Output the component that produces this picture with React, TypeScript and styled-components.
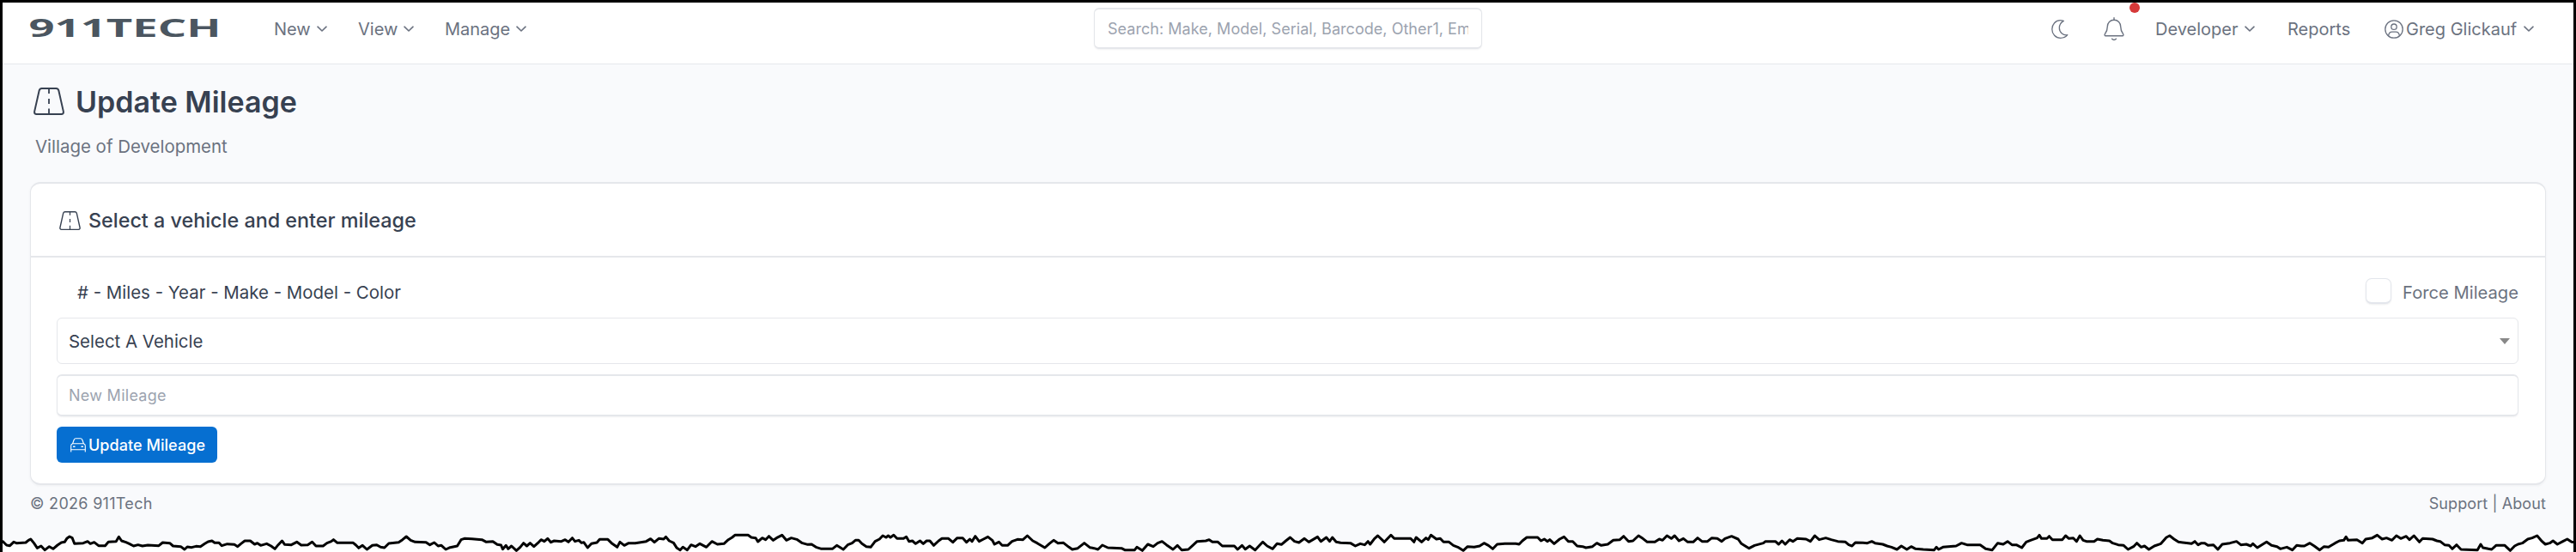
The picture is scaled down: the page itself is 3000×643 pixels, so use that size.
import React from "react";
import styled, { createGlobalStyle } from "styled-components";

const GlobalStyle = createGlobalStyle`
    *{
        box-sizing: border-box;
    }
    body{
        margin: 0;
        background: #ffffff;
        font-family: Inter, "Liberation Sans", sans-serif;
        overflow: hidden;
    }
`

interface IconProps{
    width : number
    height : number
    stroke ?: number
}

const Chevron: React.FunctionComponent = () =>(
    <svg width="12" height="8" viewBox="0 0 12 8" fill="none" stroke="currentColor" strokeWidth="1.6">
        <path d="M1 1.2 L6 6 L11 1.2" strokeLinecap="round" strokeLinejoin="round"/>
    </svg>
)

const RoadIcon: React.FunctionComponent<IconProps> = ({ width, height, stroke = 2 }) =>(
    <svg width={width} height={height} viewBox="0 0 36 32" fill="none" stroke="currentColor" strokeWidth={stroke}>
        <path d="M9.6 1 H26.4 Q28.6 1 29.3 3.2 L34.8 27.6 Q35.4 31 32.4 31 H3.6 Q.6 31 1.2 27.6 L6.7 3.2 Q7.4 1 9.6 1 Z"/>
        <path d="M18 1 V7 M18 13 V19 M18 24.5 V31" strokeWidth={stroke * 0.9}/>
    </svg>
)

const MoonIcon: React.FunctionComponent = () =>(
    <svg width="20" height="22" viewBox="0 0 20 22" fill="none" stroke="currentColor" strokeWidth="1.3" strokeLinejoin="round">
        <path d="M14.3 1.4 C12.9 .9 11.6 .7 10.4 .7 C5 .7 .8 5.3 .8 11 C.8 16.7 5 21.3 10.6 21.3 C13.9 21.3 16.9 20 18.8 17.7 C14 18.6 9.3 15 9.3 9.6 C9.3 6.2 11.3 3 14.3 1.4 Z"/>
    </svg>
)

const BellIcon: React.FunctionComponent = () =>(
    <svg width="24" height="28" viewBox="0 0 24 28" fill="none" stroke="currentColor" strokeWidth="1.4" strokeLinejoin="round">
        <path d="M12 .8 V3.4" strokeLinecap="round"/>
        <path d="M12 3.2 C7.5 3.2 4.3 6.6 4.3 11 C4.3 15.5 3 17.6 1.4 19.7 C.8 20.6 1.1 21.8 2.2 21.8 H21.8 C22.9 21.8 23.2 20.6 22.6 19.7 C21 17.6 19.7 15.5 19.7 11 C19.7 6.6 16.5 3.2 12 3.2 Z"/>
        <path d="M9.6 25.2 Q12 27.6 14.4 25.2" strokeLinecap="round"/>
    </svg>
)

const UserIcon: React.FunctionComponent = () =>(
    <svg width="22" height="22" viewBox="0 0 22 22" fill="none" stroke="currentColor" strokeWidth="1.3">
        <circle cx="11" cy="11" r="10.2"/>
        <circle cx="11" cy="8.2" r="3.2"/>
        <path d="M4.6 18.8 Q5 14.2 9 14.2 H13 Q17 14.2 17.4 18.8"/>
    </svg>
)

const CarIcon: React.FunctionComponent = () =>(
    <svg width="18" height="17" viewBox="0 0 18 17" fill="none" stroke="currentColor" strokeWidth="1.1" strokeLinejoin="round">
        <path d="M.7 16.4 V9.2 Q.7 7.2 2.6 6.7 L4.2 2.3 Q4.7 .7 6.3 .7 H11.7 Q13.3 .7 13.8 2.3 L15.4 6.7 Q17.3 7.2 17.3 9.2 V16.4"/>
        <path d="M2.6 6.7 H15.4 M.7 13.7 H17.3"/>
        <path d="M3.6 10.2 H5 M13 10.2 H14.4" strokeLinecap="round" strokeWidth="1.4"/>
    </svg>
)

// profile of the torn bottom edge, one list per third of the page width
const tornEdge: string[] = [
    "0,92 5,92 12,105 18,107 25,94 30,98 47,96 52,88 56,84 62,98 68,115 75,108 82,122 90,110 97,118 105,105 112,96 118,94 122,82 127,75 132,80 136,100 152,98 160,92 165,100 172,95 180,107 192,107 198,94 212,92 217,76 222,90 230,95 236,100 244,108 252,104 260,108 270,105 290,107 297,96 310,98 316,108 330,110 337,120 342,111 350,113 358,109 366,110 374,100 380,93 387,90 392,97 400,97 405,107 415,101 428,103 434,110 440,100 447,90 457,90 465,102 470,98 476,106 487,100 495,108 502,118 508,104 515,90 520,103 532,104 542,94 550,105 562,104 570,94 577,108 590,108 597,98 605,92 609,86 616,97 645,97 650,105 655,115 662,106 670,120 680,106 688,104 695,112 702,114 710,99 728,95 735,86 742,75 750,88 758,94 778,95 785,104 793,96 800,108 806,106 814,120 822,113 835,108 842,86 848,82 862,83 880,86 888,94 900,92 908,103 915,105 918,119 924,106 928,118 934,108 943,124 950,112 956,98 962,108 968,98 975,110 982,98 988,86 994,92 1000,82 1006,95 1012,90 1025,92 1032,86 1038,94 1045,80 1050,92 1057,88 1062,97 1066,95 1073,114 1080,100 1090,96 1095,85 1110,85 1118,100 1127,112 1132,94 1140,106 1148,98 1160,98 1180,92 1188,83 1195,95 1203,82 1212,84 1216,76 1222,90 1230,97 1236,115 1242,122 1247,112 1255,122 1262,104 1270,110 1278,100 1290,112 1300,92 1310,102 1322,100 1330,86 1337,78 1342,70 1366,70 1372,78 1380,80 1384,93 1392,80 1398,86 1404,74 1412,88 1418,80 1428,70 1436,88 1445,80 1455,85 1464,97 1475,103 1482,102 1490,112 1500,118 1520,118 1528,106 1540,120 1548,104 1556,98 1562,88 1568,88",
    "0,88 6,100 14,110 22,112 30,92 38,84 44,72 50,78 54,72 58,78 64,70 70,82 82,82 87,76 92,92 98,90 104,100 112,90 118,100 124,90 130,90 137,106 146,90 152,82 164,82 172,95 180,80 190,80 197,95 203,84 207,92 213,74 220,92 228,84 236,76 244,88 248,102 256,94 262,106 272,106 280,92 290,85 300,86 308,72 318,90 326,98 340,114 348,100 356,88 364,98 374,97 384,112 390,120 400,116 412,98 422,113 430,116 437,120 445,105 455,114 480,116 486,122 504,122 508,112 518,124 528,102 538,110 546,98 554,92 562,104 574,120 582,106 590,122 602,120 610,106 618,92 634,90 640,86 646,94 656,94 664,108 686,108 692,120 700,106 706,119 714,108 724,122 732,106 738,94 746,108 756,118 764,100 772,103 780,90 788,78 796,92 804,96 814,82 822,94 838,76 844,92 854,78 860,92 865,78 872,94 880,97 898,98 907,108 916,100 924,104 930,92 934,102 942,82 948,72 960,94 966,82 972,70 978,82 1008,82 1014,94 1018,78 1028,94 1036,80 1040,86 1045,70 1055,84 1062,82 1068,94 1078,94 1086,106 1094,112 1104,124 1112,110 1124,112 1134,108 1142,98 1150,106 1158,118 1166,102 1180,100 1200,100 1206,102 1212,90 1220,78 1240,78 1246,90 1252,84 1258,92 1262,86 1270,100 1280,84 1288,76 1296,92 1304,92 1312,108 1322,110 1328,114 1340,110 1348,98 1356,106 1368,102 1378,88 1390,86 1397,74 1406,92 1414,90 1424,72 1432,82 1440,94 1454,94 1462,84 1468,88 1476,72 1484,82 1490,72 1498,90 1506,82 1514,94 1524,94 1532,80 1540,92 1550,92 1558,80 1568,82",
    "0,82 8,92 14,82 26,74 38,84 44,100 58,116 68,106 84,98 88,92 106,92 112,102 118,90 124,102 132,86 138,92 146,82 162,84 170,92 178,72 186,86 198,80 208,86 220,92 234,94 240,104 246,108 252,96 266,97 274,98 282,92 288,98 302,102 310,108 318,112 328,120 336,108 346,120 354,110 362,118 376,120 396,122 400,112 404,120 412,112 436,108 446,98 456,104 468,104 480,104 490,118 502,122 512,98 522,102 530,92 538,104 546,104 556,114 564,94 572,88 584,80 588,70 592,82 602,82 606,74 612,86 630,86 636,72 642,82 650,80 656,92 662,72 668,88 674,92 688,92 694,84 704,88 716,90 722,98 732,104 742,106 750,120 760,110 766,98 774,112 780,108 788,120 798,108 810,100 820,78 826,72 834,84 842,94 860,98 866,100 872,92 878,104 884,98 890,98 896,106 906,104 914,120 922,102 936,98 948,92 956,104 966,102 974,108 978,100 986,114 996,102 1003,94 1012,106 1022,110 1028,118 1040,112 1050,122 1058,106 1066,108 1072,108 1082,98 1090,108 1100,122 1108,110 1116,112 1128,98 1136,90 1144,88 1148,76 1152,88 1168,86 1178,98 1184,84 1196,80 1205,70 1214,84 1222,80 1232,88 1240,72 1248,82 1258,74 1264,86 1272,72 1282,94 1288,82 1306,84 1314,90 1320,92 1328,104 1336,106 1342,118 1350,104 1358,120 1388,122 1394,102 1398,114 1408,118 1414,120 1422,106 1438,106 1448,124 1456,108 1462,102 1470,98 1480,84 1488,80 1497,72 1506,92 1512,102 1520,98 1526,90 1534,102 1544,92 1552,84 1560,94 1568,96",
]

const TornEdge: React.FunctionComponent = () =>{
    const line = tornEdge
        .flatMap((part, i) => part.split(" ").map((pair) => {
            const [x, y] = pair.split(",").map(Number)
            return `${x + i * 1568},${y}`
        }))
        .join(" ")
    return(
        <TornSvg viewBox="0 0 4704 129" preserveAspectRatio="none">
            <polygon points={`0,129 ${line} 4704,129`} fill="#ffffff"/>
            <polyline points={line} fill="none" stroke="#000000" strokeWidth="3" strokeLinejoin="round" vectorEffect="non-scaling-stroke"/>
        </TornSvg>
    )
}

const App: React.FunctionComponent = () =>{
    return(
        <Page>
            <GlobalStyle/>
            <Header>
                <NavGroup>
                    <Logo viewBox="0 0 221 22">
                        <text x="-1.5" y="21" textLength="224" lengthAdjust="spacingAndGlyphs">911TECH</text>
                    </Logo>
                    <NavItem $width={98}>New <Chevron/></NavItem>
                    <NavItem $width={101}>View <Chevron/></NavItem>
                    <NavItem $width={110}>Manage <Chevron/></NavItem>
                </NavGroup>
                <SearchInput placeholder="Search: Make, Model, Serial, Barcode, Other1, Employee"/>
                <NavGroup $end>
                    <NavItem $width={61}><MoonIcon/></NavItem>
                    <NavItem $width={60}><BellIcon/><Badge/></NavItem>
                    <NavItem $width={154} $gap={8}>Developer <Chevron/></NavItem>
                    <NavItem $width={113}>Reports</NavItem>
                    <NavItem $width={188} $gap={8}><UserName><UserIcon/>Greg Glickauf</UserName> <Chevron/></NavItem>
                </NavGroup>
            </Header>
            <PageTitle><RoadIcon width={36} height={32}/>Update Mileage</PageTitle>
            <Subtitle>Village of Development</Subtitle>
            <Card>
                <CardHeader><RoadIcon width={25} height={22} stroke={2}/>Select a vehicle and enter mileage</CardHeader>
                <CardBody>
                    <LabelRow>
                        <FormatLabel># - Miles - Year - Make - Model - Color</FormatLabel>
                        <ForceLabel><Checkbox/>Force Mileage</ForceLabel>
                    </LabelRow>
                    <SelectBox>Select A Vehicle<Caret/></SelectBox>
                    <MileageInput placeholder="New Mileage"/>
                    <SubmitButton><CarIcon/>Update Mileage</SubmitButton>
                </CardBody>
            </Card>
            <Footer>
                <FooterText $spacing={0.3}>© 2026 911Tech</FooterText>
                <FooterText $spacing={0.1}>Support | About</FooterText>
            </Footer>
            <TornEdge/>
        </Page>
    )
}

export default App

const Page = styled.div`
    position: relative;
    width: 3000px;
    height: 643px;
    background: #f9fafc;
    border: 3px solid #000000;
    border-bottom: none;
    overflow: hidden;
`

const Header = styled.header`
    display: grid;
    grid-template-columns: 1fr 452px 1fr;
    align-items: center;
    height: 72px;
    padding: 0 32px 11px;
    background: #ffffff;
    border-bottom: 1px solid #e5e7eb;
`

const NavGroup = styled.nav<{ $end ?: boolean }>`
    display: flex;
    align-items: center;
    height: 60px;
    justify-content: ${({ $end }) => $end ? "flex-end" : "flex-start"};
`

const Logo = styled.svg`
    width: 221px;
    height: 22px;
    margin-right: 63px;
    overflow: visible;
    text{
        font-family: "Open Sans", sans-serif;
        font-size: 28px;
        font-weight: 700;
        fill: #4b5660;
    }
`

const NavItem = styled.div<{ $width : number, $gap ?: number }>`
    position: relative;
    display: flex;
    align-items: center;
    gap: ${({ $gap = 7 }) => $gap}px;
    width: ${({ $width }) => $width}px;
    height: 32px;
    padding-top: 2px;
    color: #6b7280;
    font-size: 20px;
    white-space: nowrap;
`

const UserName = styled.span`
    display: flex;
    align-items: center;
    gap: 3px;
`

const Badge = styled.span`
    position: absolute;
    top: -14px;
    left: 30px;
    width: 12px;
    height: 12px;
    border-radius: 50%;
    background: #d63939;
`

const Field = styled.input`
    display: block;
    width: 100%;
    background: #ffffff;
    border: 2px solid #e5e7eb;
    border-left-width: 1px;
    border-right-width: 1px;
    border-radius: 6px;
    box-shadow: 0 1px 2px rgba(31, 41, 55, 0.06);
    font-family: inherit;
    font-size: 18px;
    letter-spacing: 0.27px;
    outline: none;
    &::placeholder{
        color: #9ca3af;
        opacity: 1;
    }
`

const SearchInput = styled(Field)`
    height: 48px;
    padding: 0 15px;
    letter-spacing: 0.04px;
`

const PageTitle = styled.h1`
    display: flex;
    align-items: center;
    gap: 13px;
    height: 60px;
    margin: 13px 0 0;
    padding-left: 36px;
    color: #374151;
    font-size: 34px;
    font-weight: 600;
`

const Subtitle = styled.div`
    height: 46px;
    margin-bottom: 18px;
    padding-left: 38px;
    color: #6b7280;
    font-size: 20.45px;
    line-height: 46px;
`

const Card = styled.section`
    width: 2930px;
    height: 353px;
    margin-left: 32px;
    background: #ffffff;
    border: 2px solid #e5e7eb;
    border-left-width: 1px;
    border-right-width: 1px;
    border-radius: 12px;
    box-shadow: 0 1px 3px rgba(31, 41, 55, 0.05);
`

const CardHeader = styled.h3`
    display: flex;
    align-items: center;
    gap: 9px;
    height: 86px;
    margin: 0;
    padding: 1px 0 0 33px;
    border-bottom: 2px solid #e5e7eb;
    color: #374151;
    font-size: 23.35px;
    font-weight: 500;
`

const CardBody = styled.div`
    padding: 24px 31px 0 30px;
`

const LabelRow = styled.div`
    display: flex;
    justify-content: space-between;
    height: 46px;
    line-height: 34px;
`

const FormatLabel = styled.span`
    padding-left: 24px;
    color: #374151;
    font-size: 20.45px;
`

const ForceLabel = styled.label`
    display: flex;
    gap: 13px;
    color: #6b7280;
    font-size: 20.2px;
`

const Checkbox = styled.span`
    width: 30px;
    height: 30px;
    background: #ffffff;
    border: 1px solid #e3e6ec;
    border-bottom-width: 2px;
    border-radius: 7px;
    box-shadow: 0 1px 2px rgba(31, 41, 55, 0.08);
`

const SelectBox = styled.div`
    display: flex;
    align-items: center;
    justify-content: space-between;
    height: 54px;
    padding: 0 9px 0 13px;
    border: 1px solid #e5e7eb;
    border-radius: 6px;
    color: #374151;
    font-size: 20.45px;
`

const Caret = styled.span`
    border: 6px solid transparent;
    border-top: 7px solid #888888;
    border-bottom: none;
`

const MileageInput = styled(Field)`
    height: 49px;
    margin-top: 12px;
    padding: 0 13px;
`

const SubmitButton = styled.button`
    display: flex;
    align-items: center;
    gap: 3px;
    width: 187px;
    height: 42px;
    margin-top: 12px;
    padding: 0 0 0 16px;
    background: #066fd1;
    border: none;
    border-radius: 6px;
    color: #ffffff;
    font-family: inherit;
    font-size: 18px;
    font-weight: 500;
    letter-spacing: 0.05px;
    white-space: nowrap;
`

const Footer = styled.footer`
    display: flex;
    justify-content: space-between;
    padding: 0 32px;
    color: #6b7280;
    font-size: 18px;
    line-height: 43px;
`

const FooterText = styled.span<{ $spacing : number }>`
    letter-spacing: ${({ $spacing }) => $spacing}px;
`

const TornSvg = styled.svg`
    position: absolute;
    left: -3px;
    bottom: 0;
    width: 3000px;
    height: 43px;
`
